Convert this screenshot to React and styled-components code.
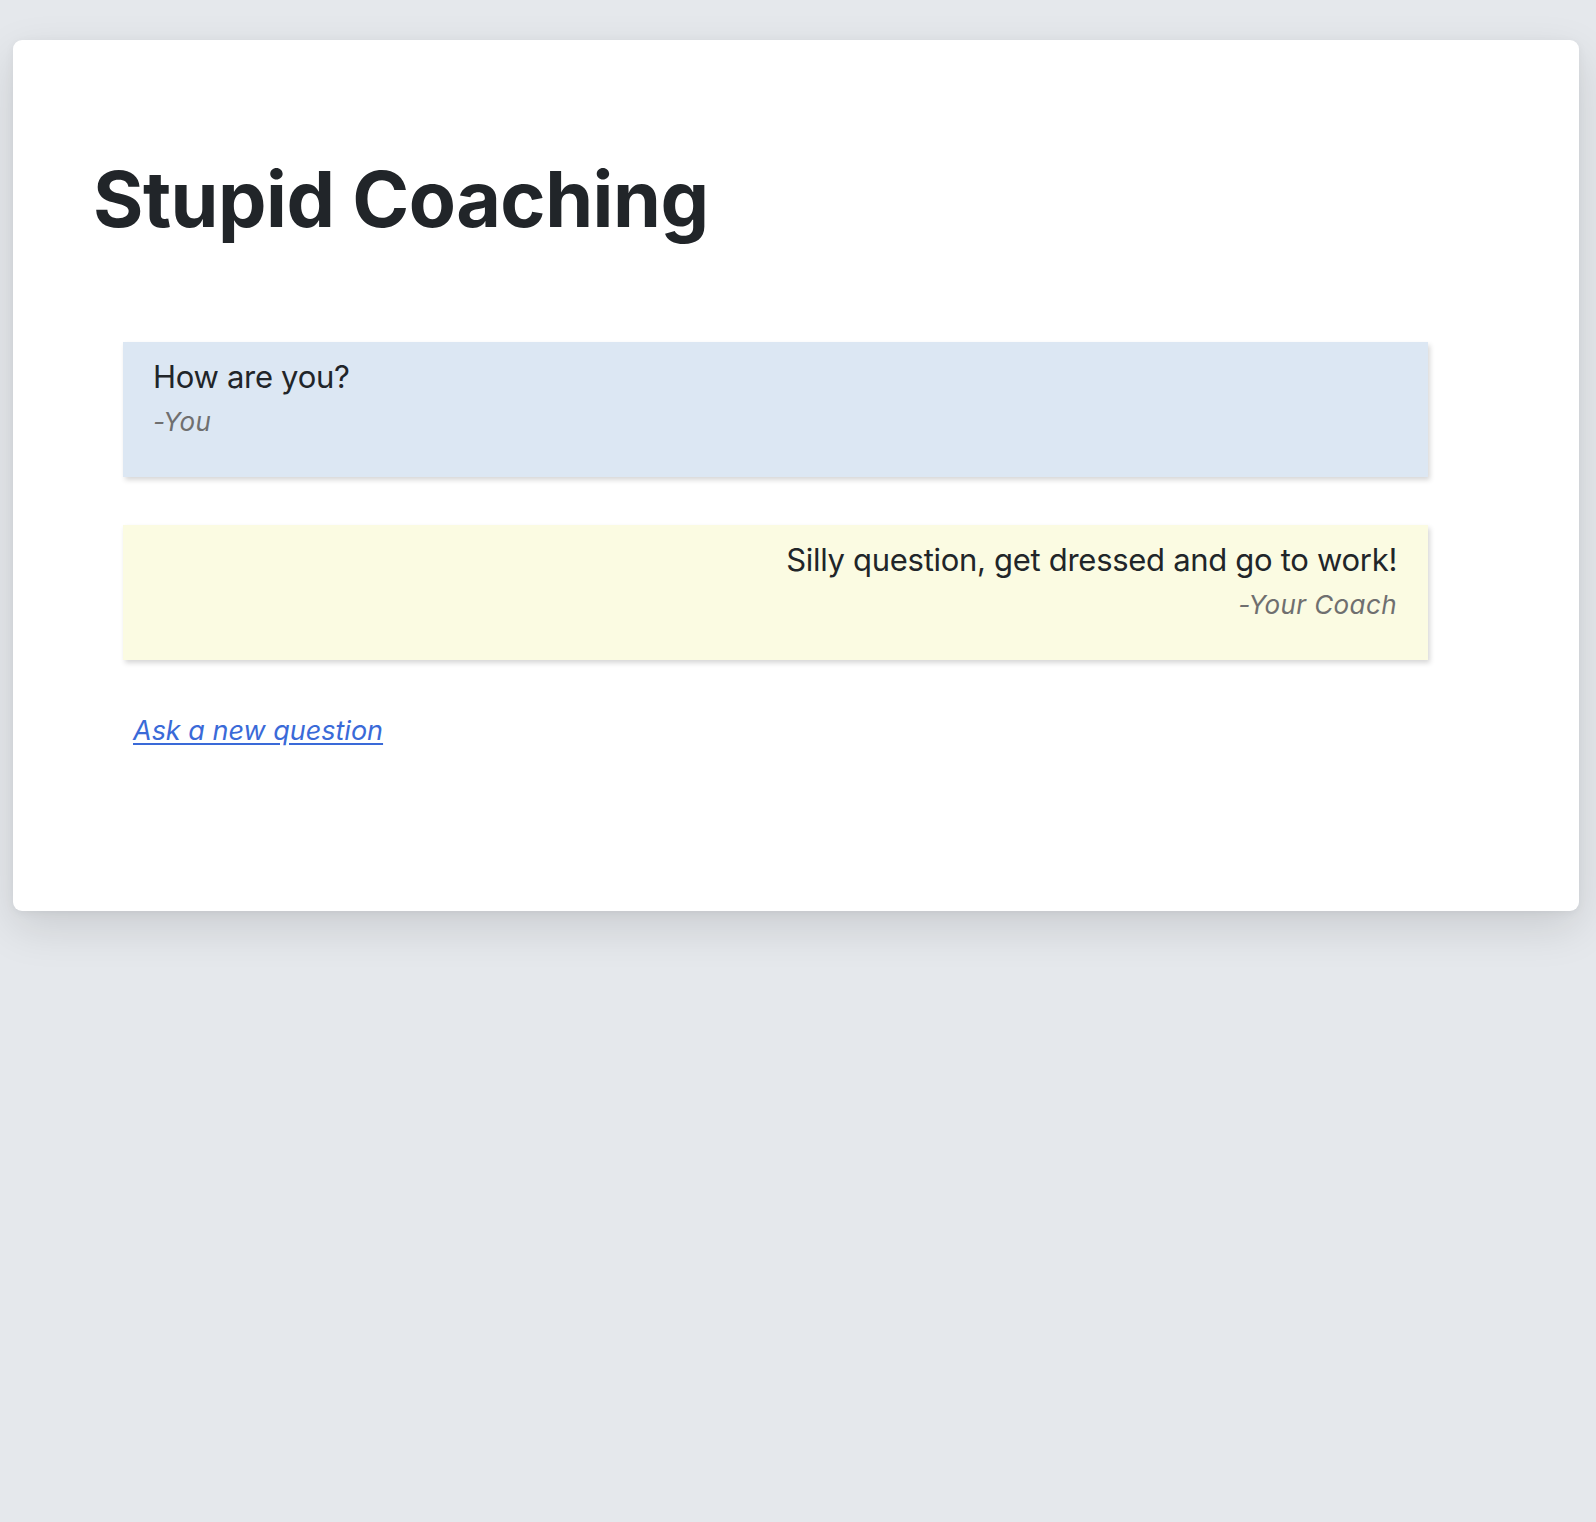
import React from "react";
import styled, { createGlobalStyle } from "styled-components";

/* ---------------- GLOBAL ---------------- */
const GlobalStyle = createGlobalStyle`
  html, body {
    margin: 0;
    min-height: 100%;
    background: #e5e8ec;
  }
  body {
    font-family: Inter, "Noto Sans", sans-serif;
    color: #212529;
  }
`;

/* ---------------- STYLES ---------------- */
const Page = styled.div`
  min-height: 100vh;
  padding: 40px 17px 0 13px;
  box-sizing: border-box;
`;

const Card = styled.main`
  display: flex;
  flex-direction: column;
  background: #ffffff;
  border-radius: 9px;
  padding: 113px 80px 160px 80px;
  box-shadow: 0 16px 46px rgba(0, 0, 0, 0.12), 0 2px 10px rgba(0, 0, 0, 0.05);
`;

const Title = styled.h1`
  margin: 0;
  font-size: 77px;
  line-height: 93px;
  font-weight: 700;
  letter-spacing: -0.5px;
  color: #212529;
`;

const Thread = styled.section`
  display: flex;
  flex-direction: column;
  gap: 48px;
  margin: 96px 71px 0 30px;
`;

const Bubble = styled.div`
  display: flex;
  flex-direction: column;
  align-items: ${({ $right }) => ($right ? "flex-end" : "flex-start")};
  text-align: ${({ $right }) => ($right ? "right" : "left")};
  background: ${({ $right }) => ($right ? "#fbfbe2" : "#dce7f3")};
  padding: 11px 31px 34px 30px;
  box-shadow: 2px 3px 5px rgba(0, 0, 0, 0.16);
`;

const Text = styled.p`
  margin: 0;
  font-size: 31px;
  line-height: 48px;
  letter-spacing: -0.3px;
  color: #212529;
`;

const Author = styled.span`
  font-size: 26px;
  line-height: 42px;
  letter-spacing: 0.4px;
  font-style: italic;
  color: #6f6f6f;
`;

const NewQuestion = styled.a`
  align-self: flex-start;
  margin: 51px 0 0 40px;
  font-size: 27px;
  line-height: 40px;
  font-style: italic;
  color: #3a6ad8;
  text-decoration: underline;
  text-underline-offset: 3px;
  cursor: pointer;
`;

/* ---------------- DATA ---------------- */
const messages = [
  { id: 1, text: "How are you?", author: "-You", coach: false },
  {
    id: 2,
    text: "Silly question, get dressed and go to work!",
    author: "-Your Coach",
    coach: true,
  },
];

/* ---------------- COMPONENT ---------------- */
export default function App() {
  return (
    <>
      <GlobalStyle />
      <Page>
        <Card>
          <Title>Stupid Coaching</Title>
          <Thread>
            {messages.map((m) => (
              <Bubble key={m.id} $right={m.coach}>
                <Text>{m.text}</Text>
                <Author>{m.author}</Author>
              </Bubble>
            ))}
          </Thread>
          <NewQuestion href="#">Ask a new question</NewQuestion>
        </Card>
      </Page>
    </>
  );
}
